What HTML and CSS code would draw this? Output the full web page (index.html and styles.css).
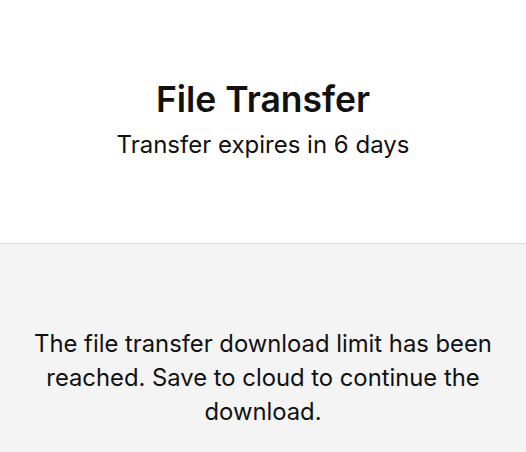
FILE: index.html
```html
<!DOCTYPE html>
<html>
<head>
<meta charset="utf-8">
<link rel="stylesheet" href="styles.css">
</head>
<body>
<header class="top">
  <h1 class="title">File Transfer</h1>
  <p class="subtitle">Transfer expires in 6 days</p>
</header>
<main class="bottom">
  <p class="message">The file transfer download limit has been reached. Save to cloud to continue the download.</p>
</main>
</body>
</html>
```
FILE: styles.css
```css
html, body {
  margin: 0;
  padding: 0;
  height: 100%;
}
body {
  font-family: Inter, "Liberation Sans", Arial, sans-serif;
  color: #111;
  background: #f4f4f4;
  display: flex;
  flex-direction: column;
}
.top {
  background: #fff;
  height: 244px;
  box-sizing: border-box;
  border-bottom: 1px solid #d9d9d9;
  display: flex;
  flex-direction: column;
  align-items: center;
  padding-top: 80px;
}
.title {
  margin: 0;
  font-size: 35.5px;
  font-weight: 600;
  line-height: 40px;
}
.subtitle {
  margin: 10px 0 0;
  font-size: 24px;
  line-height: 30px;
}
.bottom {
  flex: 1;
  padding: 0 30px;
  display: flex;
  justify-content: center;
}
.message {
  margin: 83px 0 0;
  text-align: center;
  font-size: 23.8px;
  line-height: 34px;
  max-width: 470px;
}
```
